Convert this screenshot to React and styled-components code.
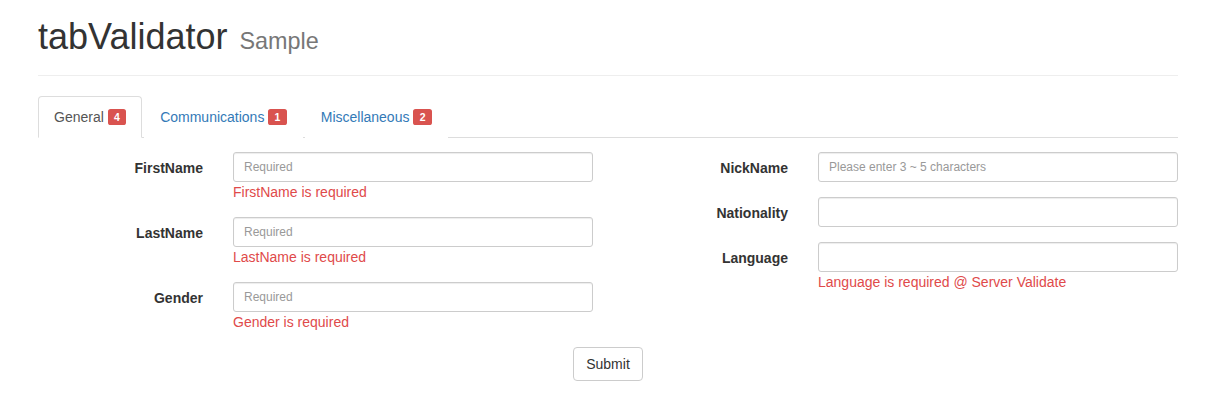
import React from 'react'
import styled, { createGlobalStyle } from 'styled-components'

const GlobalStyle = createGlobalStyle`
*{
    box-sizing: border-box;
}
body{
    margin: 0;
    background: #fff;
    font-family: "Liberation Sans", Arial, sans-serif;
    font-size: 14px;
    line-height: 20px;
    color: #333;
}
`

const tabs = [
    { name: 'General', count: 4, active: true },
    { name: 'Communications', count: 1 },
    { name: 'Miscellaneous', count: 2 },
]

const leftFields = [
    { label: 'FirstName', placeholder: 'Required', error: 'FirstName is required' },
    { label: 'LastName', placeholder: 'Required', error: 'LastName is required' },
    { label: 'Gender', placeholder: 'Required', error: 'Gender is required' },
]

const rightFields = [
    { label: 'NickName', placeholder: 'Please enter 3 ~ 5 characters' },
    { label: 'Nationality' },
    { label: 'Language', error: 'Language is required @ Server Validate' },
]

const Field = ({ label, placeholder, error }) => (
    <FormGroup>
        <ControlLabel>{label}</ControlLabel>
        <InputCol>
            <Input type="text" placeholder={placeholder || ''} />
            {error && <HelpBlock>{error}</HelpBlock>}
        </InputCol>
    </FormGroup>
)

const App = () => {
    return (
        <Container>
            <GlobalStyle />
            <PageHeader>
                <h1>tabValidator <small>Sample</small></h1>
            </PageHeader>
            <NavTabs>
                {tabs.map(t => (
                    <Tab key={t.name} active={t.active}>
                        {t.name} <Badge>{t.count}</Badge>
                    </Tab>
                ))}
            </NavTabs>
            <Form>
                <Columns>
                    <Column>
                        {leftFields.map(f => <Field key={f.label} {...f} />)}
                    </Column>
                    <Column>
                        {rightFields.map(f => <Field key={f.label} {...f} />)}
                    </Column>
                </Columns>
                <Actions>
                    <Button type="button">Submit</Button>
                </Actions>
            </Form>
        </Container>
    )
}

//Style

const Container = styled.div`
width: 1140px;
margin: 0 auto 0 38px;
`

const PageHeader = styled.div`
padding-top: 17px;
padding-bottom: 14px;
border-bottom: 1px solid #eee;
margin-bottom: 20px;
h1{
    margin: 0;
    font-size: 36px;
    line-height: 40px;
    font-weight: 500;
    color: #333;
}
small{
    font-size: 65%;
    color: #777;
    font-weight: normal;
    margin-left: 2px;
}
`

const NavTabs = styled.ul`
display: flex;
list-style: none;
margin: 0;
padding: 0;
border-bottom: 1px solid #ddd;
`

const Tab = styled.li`
margin-right: 2px;
margin-bottom: -1px;
padding: 10px 15px;
line-height: 20px;
border: 1px solid ${p => (p.active ? '#ddd' : 'transparent')};
border-bottom-color: ${p => (p.active ? '#fff' : 'transparent')};
border-radius: 4px 4px 0 0;
background: #fff;
color: ${p => (p.active ? '#555' : '#337ab7')};
cursor: pointer;
`

const Badge = styled.span`
display: inline-block;
padding: 2.1px 6.3px 3.15px;
font-size: 10.5px;
font-weight: bold;
line-height: 1;
color: #fff;
background: #d9534f;
border-radius: 2.6px;
vertical-align: 1.5px;
`

const Form = styled.form`
padding-top: 14px;
`

const Columns = styled.div`
display: grid;
grid-template-columns: 1fr 1fr;
margin: 0 -15px;
`

const Column = styled.div`
display: flex;
flex-direction: column;
`

const FormGroup = styled.div`
display: grid;
grid-template-columns: 195px 390px;
margin-bottom: 15px;
`

const ControlLabel = styled.label`
padding: 6px 15px 0;
text-align: right;
font-weight: bold;
line-height: 20px;
`

const InputCol = styled.div`
padding: 0 15px;
`

const Input = styled.input`
display: block;
width: 100%;
height: 30px;
padding: 5px 10px;
font-family: "Liberation Sans", Arial, sans-serif;
font-size: 12px;
line-height: 1.5;
color: #555;
border: 1px solid #ccc;
border-radius: 3px;
box-shadow: inset 0 1px 1px rgba(0, 0, 0, 0.075);
&::placeholder{
    color: #999;
}
`

const HelpBlock = styled.div`
color: #e04a4a;
line-height: 20px;
`

const Actions = styled.div`
display: flex;
justify-content: center;
margin-left: -15px;
margin-right: -15px;
`

const Button = styled.button`
height: 34px;
padding: 6px 12px;
font-family: "Liberation Sans", Arial, sans-serif;
font-size: 14px;
line-height: 20px;
color: #333;
background: #fff;
border: 1px solid #ccc;
border-radius: 4px;
cursor: pointer;
`

export default App
